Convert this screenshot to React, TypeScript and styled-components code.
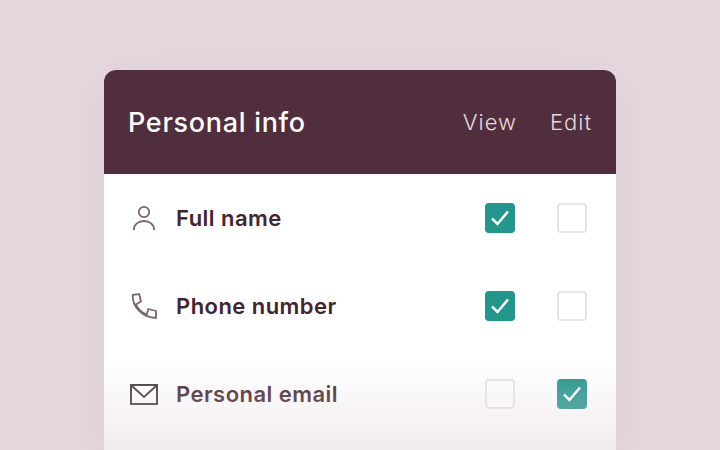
import React from "react";
import styled, { createGlobalStyle } from "styled-components";

const GlobalStyle = createGlobalStyle`
  html, body {
    margin: 0;
    padding: 0;
    width: 720px;
    height: 450px;
    overflow: hidden;
    background: #e5d8de;
    font-family: "Inter", "Liberation Sans", sans-serif;
  }
`;

const Page = styled.div`
  width: 720px;
  height: 450px;
  padding-top: 70px;
  box-sizing: border-box;
  display: flex;
  justify-content: center;
  overflow: hidden;
`;

const Card = styled.div`
  position: relative;
  width: 512px;
  height: 380px;
  flex-shrink: 0;
  border-radius: 12px 12px 0 0;
  background: #fff;
  box-shadow: 0 8px 48px rgba(82, 47, 62, 0.07);
  overflow: hidden;
`;

const Header = styled.div`
  height: 104px;
  background: #512e3d;
  display: flex;
  align-items: center;
  padding: 0 24px;
  box-sizing: border-box;
`;

const Title = styled.div`
  flex: 1;
  font-size: 27px;
  font-weight: 500;
  color: #fff;
  letter-spacing: 0.7px;
`;

const ColumnLabel = styled.div`
  font-size: 22px;
  font-weight: 300;
  color: #e5d8de;
  letter-spacing: 1px;
  margin-left: 33px;
`;

const Row = styled.div`
  height: 88px;
  display: flex;
  align-items: center;
  padding: 0 29px 0 24px;
`;

const IconSlot = styled.div`
  width: 32px;
  height: 32px;
  margin-right: 16px;
  display: flex;
  align-items: center;
  justify-content: center;
  color: #7d636e;
`;

const Label = styled.div`
  flex: 1;
  font-size: 22px;
  font-weight: 600;
  color: #44252f;
  letter-spacing: 0.45px;
`;

const Box = styled.div<{ $checked?: boolean }>`
  width: 30px;
  height: 30px;
  box-sizing: border-box;
  border-radius: 4px;
  margin-left: 42px;
  display: flex;
  align-items: center;
  justify-content: center;
  background: ${({ $checked }) => ($checked ? "#21968a" : "#fff")};
  border: ${({ $checked }) => ($checked ? "none" : "2px solid #e6e6e6")};
`;

const Fade = styled.div`
  position: absolute;
  left: 0;
  right: 0;
  bottom: 0;
  height: 90px;
  background: linear-gradient(to bottom, rgba(229, 216, 222, 0) 0%, rgba(229, 216, 222, 0.5) 100%);
  pointer-events: none;
`;

function Check() {
  return (
    <svg width="18" height="16" viewBox="0 0 18 16" fill="none">
      <path d="M1 8.5 L6.5 14 L17 1.5" stroke="#fff" strokeWidth="2.5" />
    </svg>
  );
}

function PersonIcon() {
  return (
    <svg width="24" height="26" viewBox="0 0 24 26" fill="none" stroke="currentColor" strokeWidth="1.8">
      <circle cx="12" cy="7" r="5.2" />
      <path d="M1.8 25 C2 19.5 6.5 16 12 16 C17.5 16 22 19.5 22.2 25" />
    </svg>
  );
}

function PhoneIcon() {
  return (
    <svg width="27" height="27" viewBox="0 0 27 27" fill="none" stroke="currentColor" strokeWidth="1.8" strokeLinejoin="round">
      <path d="M1.7 1.8 L8.3 1.2 L10 8.5 L5 11.5 C7 16 11 19.5 15.7 21.5 L17.3 16 L25 18 L25 25 C12 25 1 14 1.7 1.8 Z" />
    </svg>
  );
}

function MailIcon() {
  return (
    <svg width="28" height="21" viewBox="0 0 28 21" fill="none" stroke="#3e3a3d" strokeWidth="2">
      <rect x="1" y="1" width="26" height="19" />
      <path d="M2 2 L14 13 L26 2" />
    </svg>
  );
}

const rows = [
  { label: "Full name", icon: <PersonIcon />, view: true, edit: false },
  { label: "Phone number", icon: <PhoneIcon />, view: true, edit: false },
  { label: "Personal email", icon: <MailIcon />, view: false, edit: true },
];

export default function App() {
  return (
    <Page>
      <GlobalStyle />
      <Card>
        <Header>
          <Title>Personal info</Title>
          <ColumnLabel>View</ColumnLabel>
          <ColumnLabel>Edit</ColumnLabel>
        </Header>
        {rows.map((row) => (
          <Row key={row.label}>
            <IconSlot>{row.icon}</IconSlot>
            <Label>{row.label}</Label>
            <Box $checked={row.view}>{row.view && <Check />}</Box>
            <Box $checked={row.edit}>{row.edit && <Check />}</Box>
          </Row>
        ))}
        <Fade />
      </Card>
    </Page>
  );
}
